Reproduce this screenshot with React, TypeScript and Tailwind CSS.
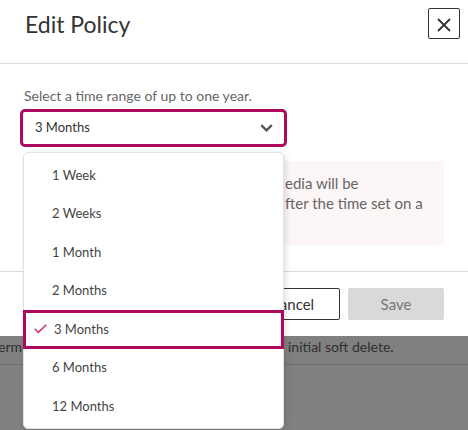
import React from "react";

const items = ["1 Week", "2 Weeks", "1 Month", "2 Months", "3 Months", "6 Months", "12 Months"];

export default function App() {
  return (
    <div
      className="relative w-[468px] h-[430px] overflow-hidden bg-[#808080]"
      style={{ fontFamily: "Lato, 'Open Sans', sans-serif" }}
    >
      {/* Modal */}
      <div className="bg-white h-[336px] flex flex-col">
        {/* Header */}
        <div className="h-[64px] border-b border-[#dcdcdc] flex items-start justify-between pt-[8px] pl-[25px] pr-[8px]">
          <div className="h-[32px] leading-[32px] text-[23px] text-[#333]">Edit Policy</div>
          <button className="w-[32px] h-[31px] border border-[#333] rounded-[2px] flex items-center justify-center">
            <svg width="14" height="14" viewBox="0 0 14 14" className="mt-[2px]">
              <path d="M1 1 L13 13 M13 1 L1 13" stroke="#333" strokeWidth="1.8" fill="none" />
            </svg>
          </button>
        </div>

        {/* Body */}
        <div className="pt-[24px] px-[24px] h-[208px] border-b border-[#dcdcdc]">
          <div className="text-[14px] leading-[16px] text-[#666]">Select a time range of up to one year.</div>
          <div className="mt-[5px] -ml-[4px] w-[267px] h-[38px] border-[3px] border-[#ad0a5d] rounded-[5px] flex items-center justify-between pl-[12px] pr-[11px]">
            <span className="text-[13px] text-[#333]">3 Months</span>
            <svg width="13" height="8" viewBox="0 0 13 8">
              <path d="M1.2 1.2 L6.5 6.3 L11.8 1.2" stroke="#555" strokeWidth="2.4" fill="none" />
            </svg>
          </div>
          <div className="mt-[14px] h-[84px] bg-[#fdf6f6] py-[12px] pl-[261px] text-[15px] leading-[20px] text-[#666] whitespace-nowrap">
            <div>edia will be</div>
            <div>fter the time set on a</div>
          </div>
        </div>

        {/* Footer */}
        <div className="flex-1 flex justify-end items-start gap-[8px] pt-[16px] pr-[24px]">
          <button className="w-[96px] h-[32px] border border-[#333] rounded-[2px] text-[15px] text-[#333]">Cancel</button>
          <button className="w-[96px] h-[32px] bg-[#d9d9d9] rounded-[2px] text-[15px] text-[#777]">Save</button>
        </div>
      </div>

      {/* Page behind overlay */}
      <div className="h-[29px] border-b border-[#6f6f6f] flex items-start pt-[3px] text-[14px] leading-[16px] text-[#2f2f2f] whitespace-nowrap">
        <span className="-ml-[10px] w-[298px]">Perm</span>
        <span>initial soft delete.</span>
      </div>

      {/* Dropdown menu */}
      <div className="absolute left-[23px] top-[152px] w-[261px] h-[277px] bg-white border border-[#e2e2e2] rounded-[5px] shadow-[2px_2px_6px_rgba(0,0,0,0.12)] pt-[3px]">
        {items.map((it) => {
          const sel = it === "3 Months";
          return (
            <div
              key={it}
              className={
                sel
                  ? "-mx-px h-[38.5px] border-[3px] border-[#ad0a5d] flex items-center pl-[8px] text-[13px] text-[#444]"
                  : "h-[38.5px] flex items-center pl-[28px] text-[13px] text-[#444]"
              }
            >
              {sel && (
                <svg width="13" height="10" viewBox="0 0 13 10" className="mr-[7px]">
                  <path d="M0.8 4.8 L4.3 8.4 L12.3 0.8" stroke="#d42a72" strokeWidth="1.5" fill="none" />
                </svg>
              )}
              {it}
            </div>
          );
        })}
      </div>
    </div>
  );
}
